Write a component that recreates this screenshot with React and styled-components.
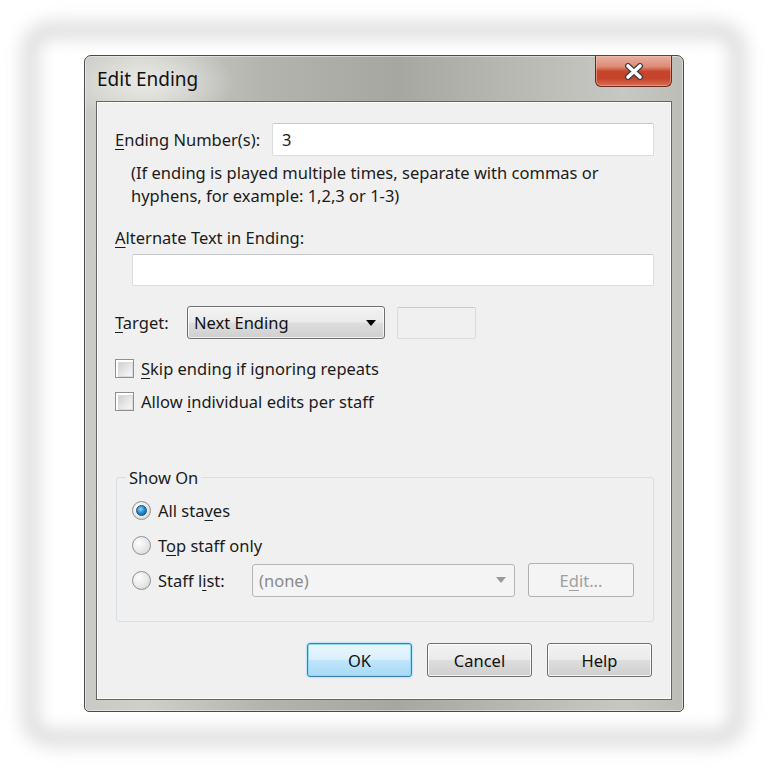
import React from "react";
import styled, { createGlobalStyle, css } from "styled-components";

const GlobalStyle = createGlobalStyle`
  html, body {
    margin: 0;
    padding: 0;
    background: #fff;
  }
  body {
    font-family: "Noto Sans", "Open Sans", sans-serif;
    color: #1b1b1b;
  }
  * { box-sizing: border-box; }
`;

const Page = styled.div`
  width: 768px;
  height: 768px;
  padding: 30px;
  background: #fff;
  overflow: hidden;
`;

const Halo = styled.div`
  position: relative;
  height: 100%;
  padding: 25px 54px 0;
  &::before {
    content: "";
    position: absolute;
    inset: -7px;
    border-radius: 28px;
    border: 14px solid #d6d6d6;
    filter: blur(9px);
    pointer-events: none;
  }
`;

const Window = styled.div`
  position: relative;
  width: 600px;
  height: 657px;
  display: flex;
  flex-direction: column;
  padding: 0 11px 11px;
  border: 1px solid #4a4a4a;
  border-radius: 7px 7px 5px 5px;
  background:
    radial-gradient(ellipse 90px 40px at 60px 26px, rgba(236, 236, 232, 0.9), rgba(236, 236, 232, 0) 100%),
    linear-gradient(90deg, #c9c9c5 0%, #cfcfcb 10%, #b4b4af 30%, #a7a7a2 52%, #b9b9b4 72%, #c7c7c3 90%, #bdbdb8 100%);
  box-shadow: inset 0 0 0 1px rgba(255, 255, 255, 0.45);
`;

const TitleBar = styled.div`
  height: 45px;
  display: flex;
  justify-content: space-between;
  align-items: flex-start;
`;

const Title = styled.div`
  margin-top: 11px;
  margin-left: 1px;
  font-size: 19px;
  line-height: 24px;
  color: #111;
`;

const CloseButton = styled.div`
  width: 77px;
  height: 31px;
  display: flex;
  align-items: center;
  justify-content: center;
  border: 1px solid #6b2a1c;
  border-top: none;
  border-radius: 0 0 6px 6px;
  background: linear-gradient(180deg, #e8b0a2 0%, #dc8c76 35%, #c8432a 52%, #c4442b 75%, #d76f55 100%);
  box-shadow: inset 0 0 0 1px rgba(255, 200, 180, 0.45);
`;

const Client = styled.div`
  flex: 1;
  display: flex;
  flex-direction: column;
  padding: 21px 17px 0 18px;
  border: 1px solid #656565;
  background: #f0f0f0;
  box-shadow: inset 0 0 0 1px #fbfbfb;
  font-size: 16.5px;
  line-height: 23px;
`;

const Key = styled.span`
  text-decoration: underline;
  text-underline-offset: 3px;
  text-decoration-thickness: 1px;
`;

const Row = styled.div`
  display: flex;
  align-items: center;
  margin-top: ${(p) => p.$mt || 0}px;
  margin-left: ${(p) => p.$ml || 0}px;
`;

const Label = styled.span`
  flex: none;
  width: ${(p) => (p.$w ? `${p.$w}px` : "auto")};
  white-space: nowrap;
`;

const TextBox = styled.div`
  flex: ${(p) => (p.$w ? "none" : 1)};
  width: ${(p) => (p.$w ? `${p.$w}px` : "auto")};
  height: ${(p) => p.$h || 33}px;
  display: flex;
  align-items: center;
  padding-left: 9px;
  border: 1px solid #d9dcdf;
  border-top-color: #c5c8cc;
  border-radius: 2px;
  background: ${(p) => (p.$disabled ? "#f0f0f0" : "#fff")};
`;

const Hint = styled.div`
  margin-top: 5px;
  padding-left: 16px;
`;

const Block = styled.div`
  margin-top: ${(p) => p.$mt || 0}px;
  margin-left: ${(p) => p.$ml || 0}px;
`;

const Arrow = styled.span`
  width: 0;
  height: 0;
  border-left: 5px solid transparent;
  border-right: 5px solid transparent;
  border-top: 6px solid ${(p) => (p.$disabled ? "#9a9a9a" : "#000")};
`;

const Combo = styled.div`
  flex: none;
  width: ${(p) => p.$w}px;
  height: 33px;
  display: flex;
  align-items: center;
  justify-content: space-between;
  padding: 0 8px 0 6px;
  border-radius: 3px;
  ${(p) =>
    p.$disabled
      ? css`
          border: 1px solid #b5b5b5;
          background: #f4f4f4;
          color: #8a8a8a;
        `
      : css`
          border: 1px solid #707070;
          background: linear-gradient(180deg, #f2f2f2 0%, #ebebeb 48%, #dddddd 52%, #cfcfcf 100%);
          box-shadow: inset 0 0 0 1px rgba(255, 255, 255, 0.7);
          color: #111;
        `}
`;

const CheckBox = styled.span`
  flex: none;
  width: 19px;
  height: 19px;
  margin-right: 7px;
  border: 1px solid #8e8f8f;
  background: #fff;
  padding: 2px;
  &::after {
    content: "";
    display: block;
    width: 100%;
    height: 100%;
    background: linear-gradient(135deg, #cdd0d4 0%, #e4e6e8 50%, #f7f7f7 100%);
    border: 1px solid #dadada;
  }
`;

const Radio = styled.span`
  flex: none;
  width: 19px;
  height: 19px;
  margin-right: 7px;
  border-radius: 50%;
  border: 1px solid #8e8f8f;
  background: radial-gradient(circle at 35% 35%, #fdfdfd 0%, #e8e8e8 55%, #cfcfcf 100%);
  display: flex;
  align-items: center;
  justify-content: center;
  ${(p) =>
    p.$checked &&
    css`
      &::after {
        content: "";
        width: 9px;
        height: 9px;
        border-radius: 50%;
        border: 1px solid #1a4f7a;
        background: radial-gradient(circle at 40% 35%, #8fd6fa 0%, #2a8fd0 45%, #0d4f85 100%);
      }
    `}
`;

const Group = styled.fieldset`
  margin: 53px 0 0 1px;
  padding: 10px 19px 24px 15px;
  border: 1px solid #d5dfe5;
  border-radius: 3px;
  min-width: 0;
`;

const Legend = styled.legend`
  margin-left: -6px;
  padding: 0 3px;
  line-height: 23px;
`;

const Button = styled.div`
  width: ${(p) => p.$w || 105}px;
  height: 34px;
  display: flex;
  align-items: center;
  justify-content: center;
  border-radius: 3px;
  ${(p) =>
    p.$primary
      ? css`
          border: 1px solid #3c7fb1;
          background: linear-gradient(180deg, #eaf6fd 0%, #d9f0fc 48%, #bee6fd 52%, #a7d9f5 100%);
          box-shadow: inset 0 0 0 1px #91d7f7, 0 0 2px #58c6f8;
          color: #111;
        `
      : p.$disabled
      ? css`
          border: 1px solid #adb2b5;
          background: #f4f4f4;
          color: #a0a0a0;
        `
      : css`
          border: 1px solid #707070;
          background: linear-gradient(180deg, #f2f2f2 0%, #ebebeb 48%, #dddddd 52%, #cfcfcf 100%);
          box-shadow: inset 0 0 0 1px rgba(255, 255, 255, 0.7);
          color: #111;
        `}
`;

const ButtonBar = styled.div`
  display: flex;
  justify-content: flex-end;
  gap: 15px;
  margin-top: 21px;
  padding-right: 2px;
`;

function CloseGlyph() {
  return (
    <svg width="20" height="17" viewBox="0 0 20 17">
      <path d="M4 3 L16 14 M16 3 L4 14" stroke="#3d3d48" strokeWidth="6" strokeLinecap="round" />
      <path d="M4 3 L16 14 M16 3 L4 14" stroke="#fff" strokeWidth="3.6" strokeLinecap="round" />
    </svg>
  );
}

export default function App() {
  return (
    <Page>
      <GlobalStyle />
      <Halo>
        <Window>
          <TitleBar>
            <Title>Edit Ending</Title>
            <CloseButton>
              <CloseGlyph />
            </CloseButton>
          </TitleBar>
          <Client>
            <Row>
              <Label $w={157}>
                <Key>E</Key>nding Number(s):
              </Label>
              <TextBox>3</TextBox>
            </Row>
            <Hint>
              (If ending is played multiple times, separate with commas or
              <br />
              hyphens, for example: 1,2,3 or 1-3)
            </Hint>
            <Block $mt={19}>
              <Key>A</Key>lternate Text in Ending:
            </Block>
            <Row $mt={5} $ml={17}>
              <TextBox $h={32} />
            </Row>
            <Row $mt={20}>
              <Label $w={72}>
                <Key>T</Key>arget:
              </Label>
              <Combo $w={198}>
                <span>Next Ending</span>
                <Arrow />
              </Combo>
              <Row $ml={12}>
                <TextBox $w={79} $h={32} $disabled />
              </Row>
            </Row>
            <Row $mt={18}>
              <CheckBox />
              <Label>
                <Key>S</Key>kip ending if ignoring repeats
              </Label>
            </Row>
            <Row $mt={10}>
              <CheckBox />
              <Label>
                Allow <Key>i</Key>ndividual edits per staff
              </Label>
            </Row>
            <Group>
              <Legend>Show On</Legend>
              <Row>
                <Radio $checked />
                <Label>
                  All sta<Key>v</Key>es
                </Label>
              </Row>
              <Row $mt={12}>
                <Radio />
                <Label>
                  T<Key>o</Key>p staff only
                </Label>
              </Row>
              <Row $mt={6}>
                <Radio />
                <Label $w={94}>
                  Staff l<Key>i</Key>st:
                </Label>
                <Combo $w={263} $disabled>
                  <span>(none)</span>
                  <Arrow $disabled />
                </Combo>
                <Row $ml={13}>
                  <Button $w={106} $disabled>
                    E<Key>d</Key>it...
                  </Button>
                </Row>
              </Row>
            </Group>
            <ButtonBar>
              <Button $primary>OK</Button>
              <Button>Cancel</Button>
              <Button>Help</Button>
            </ButtonBar>
          </Client>
        </Window>
      </Halo>
    </Page>
  );
}
